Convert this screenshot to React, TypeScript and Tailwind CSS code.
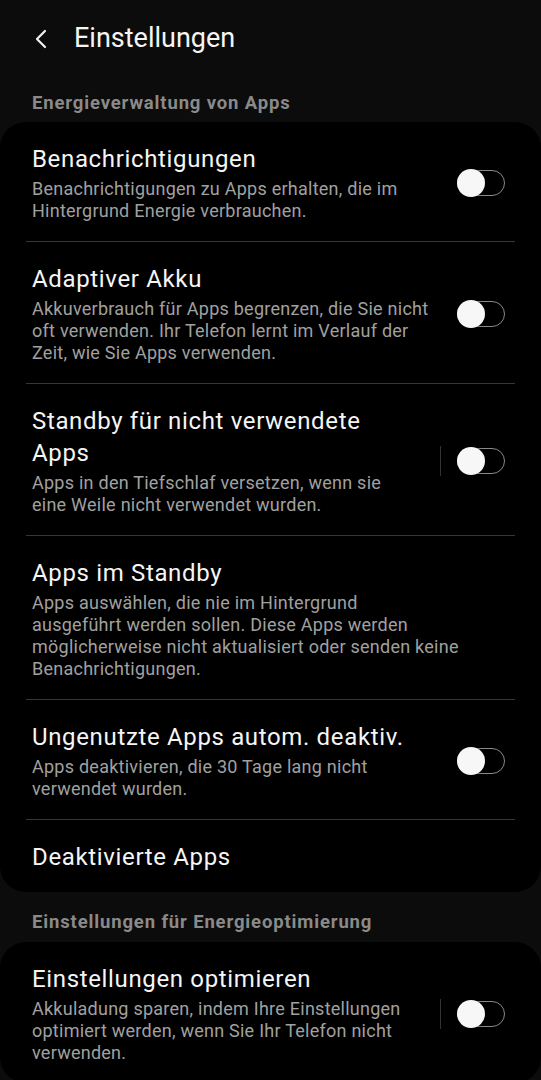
import React from "react";

const font = { fontFamily: "Roboto, 'Noto Sans', sans-serif" };

function Toggle({ sep }: { sep?: boolean }) {
  return (
    <div className="flex items-center shrink-0">
      {sep && <div className="w-px h-[30px] bg-[#333333] mr-4" />}
      <div className="relative w-[48px] h-[26px] rounded-full border-[1.5px] border-[#8a8a8a]">
        <div className="absolute left-[-1.5px] top-1/2 -translate-y-1/2 w-[28px] h-[28px] rounded-full bg-[#f7f7f7] shadow-[0_0_3px_rgba(0,0,0,0.6)]" />
      </div>
    </div>
  );
}

function Item({
  title,
  sub,
  toggle,
  sep,
}: {
  title: React.ReactNode;
  sub?: React.ReactNode;
  toggle?: boolean;
  sep?: boolean;
}) {
  return (
    <div className="flex items-center pl-8 pr-[36px] pt-[21px] pb-[19px]">
      <div className="flex-1 min-w-0 whitespace-nowrap">
        <div className="text-[24px] leading-[32px] tracking-[0.65px] text-[#f5f5f5]">{title}</div>
        {sub && (
          <div className="mt-[3px] text-[18px] leading-[22px] tracking-[0.25px] text-[#a0a0a0]">{sub}</div>
        )}
      </div>
      {toggle && <Toggle sep={sep} />}
    </div>
  );
}

const Divider = () => <div className="mx-[26px] h-px bg-[#363636]" />;

export default function App() {
  return (
    <div className="w-[541px] h-[1080px] overflow-hidden bg-[#0c0c0c]" style={font}>
      <div className="h-[76px] flex items-center pt-[1px]">
        <svg width="16" height="22" viewBox="0 0 16 22" className="ml-[33px]">
          <polyline points="12,3 4,11 12,19" fill="none" stroke="#f2f2f2" strokeWidth="2.2" strokeLinecap="round" strokeLinejoin="round" />
        </svg>
        <span className="ml-[25px] text-[27px] tracking-[0px] text-[#f5f5f5] leading-none">Einstellungen</span>
      </div>
      <div className="pl-8 pt-4 pb-2 text-[18.5px] leading-[22px] font-bold tracking-[0.85px] text-[#8a8a8a]">
        Energieverwaltung von Apps
      </div>
      <div className="bg-black rounded-[26px]">
        <Item
          title="Benachrichtigungen"
          sub={<>Benachrichtigungen zu Apps erhalten, die im<br />Hintergrund Energie verbrauchen.</>}
          toggle
        />
        <Divider />
        <Item
          title="Adaptiver Akku"
          sub={<>Akkuverbrauch für Apps begrenzen, die Sie nicht<br />oft verwenden. Ihr Telefon lernt im Verlauf der<br />Zeit, wie Sie Apps verwenden.</>}
          toggle
        />
        <Divider />
        <Item
          title={<>Standby für nicht verwendete<br />Apps</>}
          sub={<>Apps in den Tiefschlaf versetzen, wenn sie<br />eine Weile nicht verwendet wurden.</>}
          toggle
          sep
        />
        <Divider />
        <Item
          title="Apps im Standby"
          sub={<>Apps auswählen, die nie im Hintergrund<br />ausgeführt werden sollen. Diese Apps werden<br />möglicherweise nicht aktualisiert oder senden keine<br />Benachrichtigungen.</>}
        />
        <Divider />
        <Item
          title="Ungenutzte Apps autom. deaktiv."
          sub={<>Apps deaktivieren, die 30 Tage lang nicht<br />verwendet wurden.</>}
          toggle
        />
        <Divider />
        <Item title="Deaktivierte Apps" />
      </div>
      <div className="pl-8 pt-[19px] pb-[9px] text-[18.5px] leading-[22px] font-bold tracking-[0.85px] text-[#8a8a8a]">
        Einstellungen für Energieoptimierung
      </div>
      <div className="bg-black rounded-[26px]">
        <Item
          title="Einstellungen optimieren"
          sub={<>Akkuladung sparen, indem Ihre Einstellungen<br />optimiert werden, wenn Sie Ihr Telefon nicht<br />verwenden.</>}
          toggle
          sep
        />
      </div>
    </div>
  );
}
